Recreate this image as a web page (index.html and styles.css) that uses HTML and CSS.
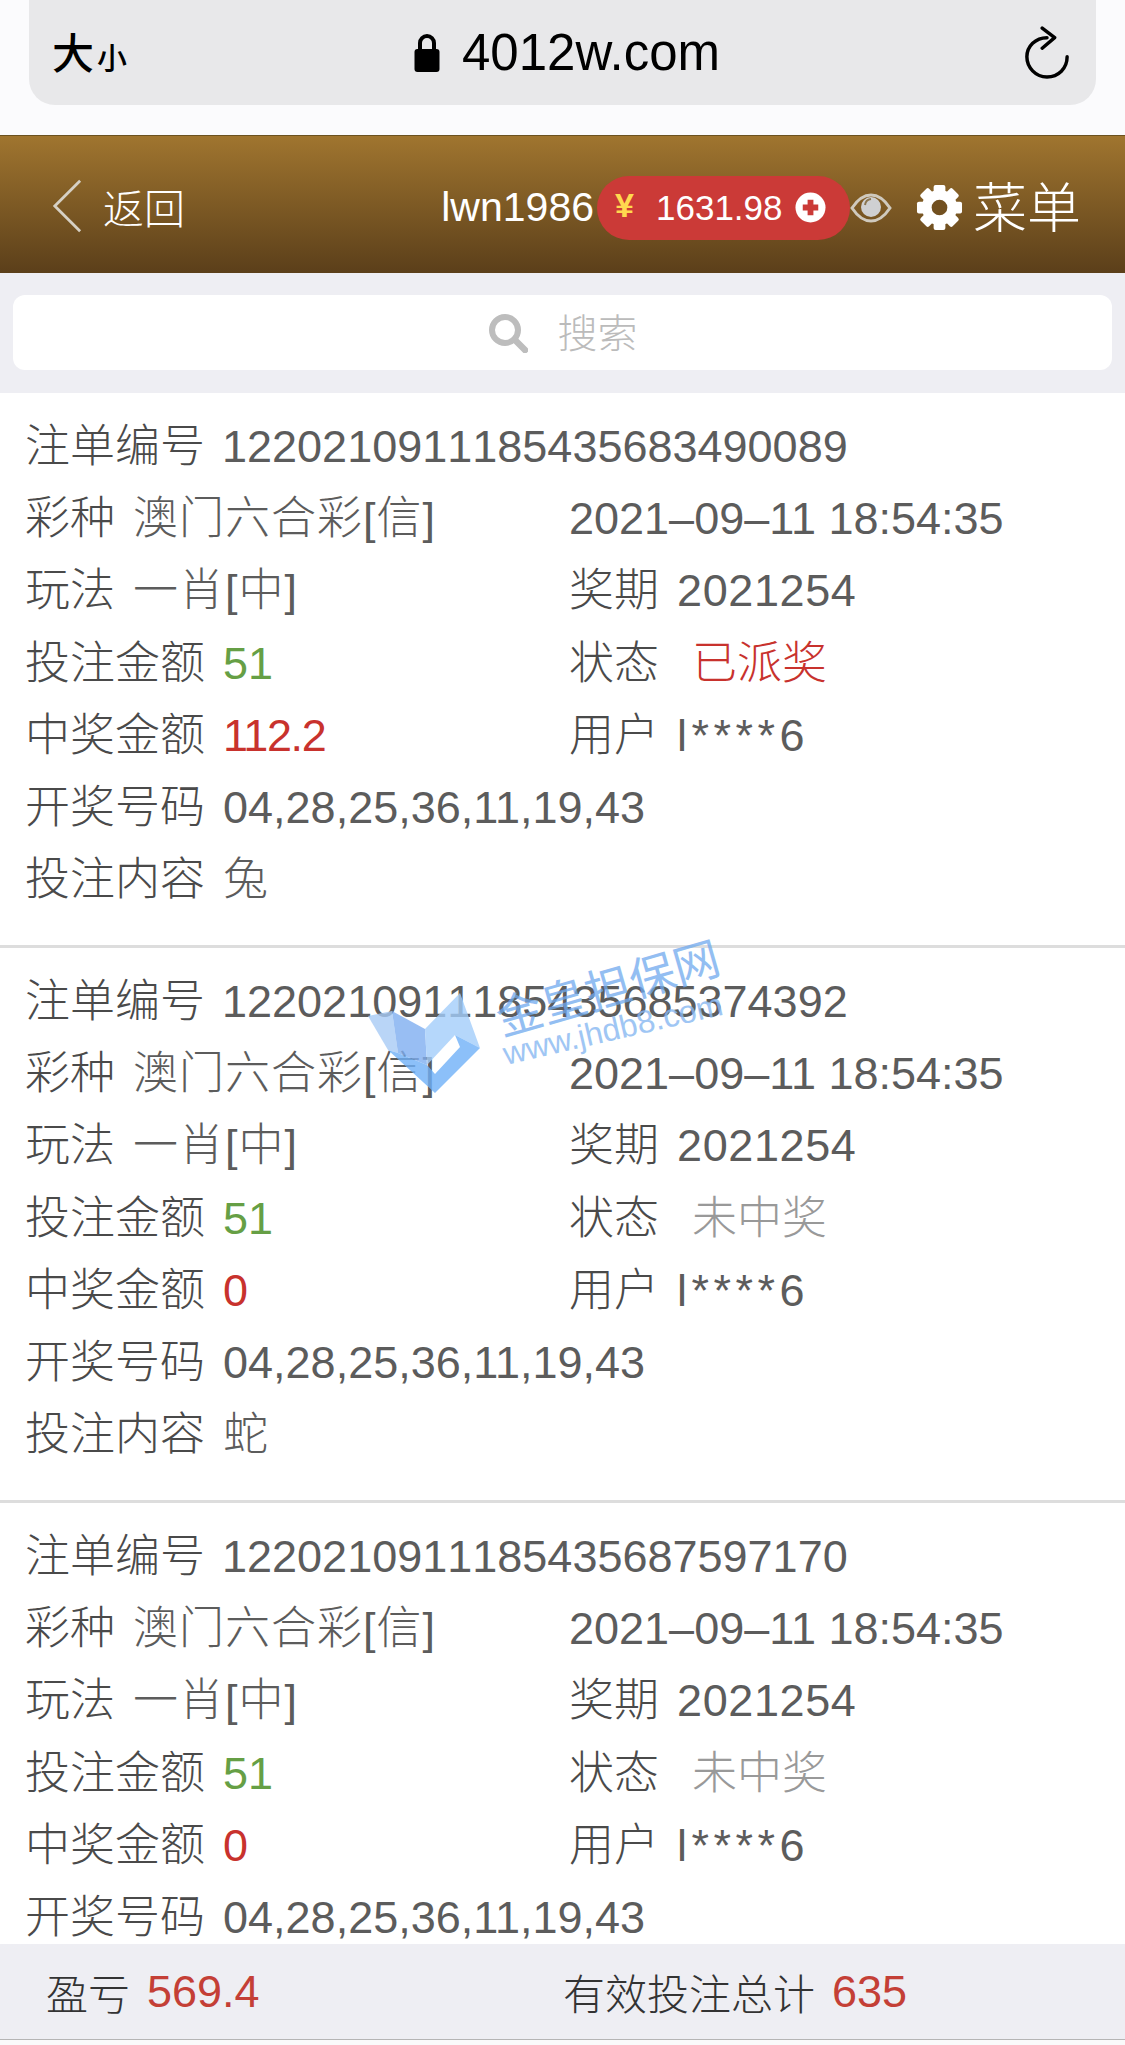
FILE: index.html
```html
<!DOCTYPE html>
<html lang="zh-CN">
<head>
<meta charset="utf-8">
<title>注单</title>
<link rel="stylesheet" href="styles.css">
</head>
<body>
<div class="page">
  <div class="chrome">
    <div class="urlbar">
      <span class="aa"><span class="aa-big">大</span><span class="aa-small">小</span></span>
      <span class="url">
        <svg class="lock" viewBox="0 0 26 40"><path d="M6 17V10a7 7 0 0 1 14 0v7" fill="none" stroke="#000" stroke-width="4"/><rect x="0.5" y="16" width="25" height="23" rx="3" fill="#000"/></svg>
        <span class="url-text">4012w.com</span>
      </span>
      <svg class="reload" viewBox="0 0 48 56"><path d="M24 12C12 12 3 21 3 32s9 21 21 21 21-9 21-21" fill="none" stroke="#000" stroke-width="3.6" stroke-linecap="round"/><path d="M19 2l13 10-13 11" fill="none" stroke="#000" stroke-width="3.6" stroke-linecap="round" stroke-linejoin="round"/></svg>
    </div>
  </div>
  <header class="topbar">
    <div class="back">
      <svg class="chevron" viewBox="0 0 32 58"><path d="M30 2L3 29l27 27" fill="none" stroke="#d6d0c4" stroke-width="3"/></svg>
      <span class="back-text">返回</span>
    </div>
    <div class="account">
      <span class="username">lwn1986</span>
      <span class="balance">
        <span class="yen">¥</span>
        <span class="amount">1631.98</span>
        <svg class="plus" viewBox="0 0 32 32"><circle cx="16" cy="16" r="15.5" fill="#fff"/><path d="M16 8v16M8 16h16" stroke="#cb3a37" stroke-width="6"/></svg>
      </span>
      <svg class="eye" viewBox="0 0 42 30"><path d="M2 15C8 6 14 2 21 2s13 4 19 13c-6 9-12 13-19 13S8 24 2 15z" fill="none" stroke="#cfc9bd" stroke-width="3"/><circle cx="21" cy="14" r="10" fill="#cfd0d2"/><path d="M15 12a7 7 0 0 1 6-6" fill="none" stroke="#8a7550" stroke-width="2"/></svg>
      <svg class="gear" viewBox="0 0 48 48">
        <g fill="#fff">
          <rect x="18" y="1" width="12" height="46" rx="2"/>
          <rect x="18" y="1" width="12" height="46" rx="2" transform="rotate(45 24 24)"/>
          <rect x="18" y="1" width="12" height="46" rx="2" transform="rotate(90 24 24)"/>
          <rect x="18" y="1" width="12" height="46" rx="2" transform="rotate(135 24 24)"/>
        </g>
        <circle cx="24" cy="24" r="13" fill="none" stroke="#fff" stroke-width="10"/>
        <circle cx="24" cy="24" r="8" fill="#725020"/>
      </svg>
      <span class="menu-text">菜单</span>
    </div>
  </header>
  <div class="searchwrap">
    <div class="search">
      <svg class="search-icon" viewBox="0 0 40 40"><circle cx="17" cy="17" r="13" fill="none" stroke="#bdbdbd" stroke-width="6"/><path d="M27 27l10 10" stroke="#bdbdbd" stroke-width="6.5" stroke-linecap="round"/></svg>
      <span class="search-text">搜索</span>
    </div>
  </div>
  <main class="list">
    <article class="card">
      <div class="row"><span class="label">注单编号</span><span class="val serial">1220210911185435683490089</span></div>
      <div class="row two"><div class="cell"><span class="label">彩种</span><span class="val game">澳门六合彩[信]</span></div><div class="cell"><span class="val">2021–09–11 18:54:35</span></div></div>
      <div class="row two"><div class="cell"><span class="label">玩法</span><span class="val game">一肖[中]</span></div><div class="cell"><span class="label">奖期</span><span class="val period">2021254</span></div></div>
      <div class="row two"><div class="cell"><span class="label">投注金额</span><span class="green">51</span></div><div class="cell"><span class="label">状态</span><span class="status red">已派奖</span></div></div>
      <div class="row two"><div class="cell"><span class="label">中奖金额</span><span class="red prize">112.2</span></div><div class="cell"><span class="label">用户</span><span class="val masked">l****6</span></div></div>
      <div class="row"><span class="label">开奖号码</span><span class="val">04,28,25,36,11,19,43</span></div>
      <div class="row"><span class="label">投注内容</span><span class="val">兔</span></div>
    </article>
    <article class="card">
      <div class="row"><span class="label">注单编号</span><span class="val serial">1220210911185435685374392</span></div>
      <div class="row two"><div class="cell"><span class="label">彩种</span><span class="val game">澳门六合彩[信]</span></div><div class="cell"><span class="val">2021–09–11 18:54:35</span></div></div>
      <div class="row two"><div class="cell"><span class="label">玩法</span><span class="val game">一肖[中]</span></div><div class="cell"><span class="label">奖期</span><span class="val period">2021254</span></div></div>
      <div class="row two"><div class="cell"><span class="label">投注金额</span><span class="green">51</span></div><div class="cell"><span class="label">状态</span><span class="status gray">未中奖</span></div></div>
      <div class="row two"><div class="cell"><span class="label">中奖金额</span><span class="red">0</span></div><div class="cell"><span class="label">用户</span><span class="val masked">l****6</span></div></div>
      <div class="row"><span class="label">开奖号码</span><span class="val">04,28,25,36,11,19,43</span></div>
      <div class="row"><span class="label">投注内容</span><span class="val">蛇</span></div>
    </article>
    <article class="card">
      <div class="row"><span class="label">注单编号</span><span class="val serial">1220210911185435687597170</span></div>
      <div class="row two"><div class="cell"><span class="label">彩种</span><span class="val game">澳门六合彩[信]</span></div><div class="cell"><span class="val">2021–09–11 18:54:35</span></div></div>
      <div class="row two"><div class="cell"><span class="label">玩法</span><span class="val game">一肖[中]</span></div><div class="cell"><span class="label">奖期</span><span class="val period">2021254</span></div></div>
      <div class="row two"><div class="cell"><span class="label">投注金额</span><span class="green">51</span></div><div class="cell"><span class="label">状态</span><span class="status gray">未中奖</span></div></div>
      <div class="row two"><div class="cell"><span class="label">中奖金额</span><span class="red">0</span></div><div class="cell"><span class="label">用户</span><span class="val masked">l****6</span></div></div>
      <div class="row"><span class="label">开奖号码</span><span class="val">04,28,25,36,11,19,43</span></div>
    </article>
  </main>
  <footer class="totals">
    <div class="total total-left"><span>盈亏</span><span class="total-val">569.4</span></div>
    <div class="total total-right"><span>有效投注总计</span><span class="total-val">635</span></div>
  </footer>
  <svg class="watermark" viewBox="0 0 380 190">
    <polygon points="8,86 32,81 38,123 28,120" fill="#a7cbf5" opacity=".8"/>
    <polygon points="32,81 65,99 67,135 38,123" fill="#7eaef0" opacity=".8"/>
    <polygon points="65,99 100,63 120,118 95,105 67,135" fill="#a3cdfa" opacity=".8"/>
    <polygon points="28,120 38,123 67,135 75,144 100,117 95,105 120,118 75,163" fill="#6fb0f8" opacity=".8"/>
    <text class="wm-cn" transform="translate(142 106) rotate(-16)">金皇担保网</text>
    <text class="wm-en" transform="translate(146 135) rotate(-13)">www.jhdb8.com</text>
  </svg>
</div>
</body>
</html>
```

FILE: styles.css
```css
* { box-sizing: border-box; }
html, body { margin: 0; padding: 0; }
body {
  font-family: "Liberation Sans", "Noto Sans CJK SC", sans-serif;
  color: #555;
  background: #fff;
}
.page {
  position: relative;
  width: 1125px;
  height: 2045px;
  display: flex;
  flex-direction: column;
  overflow: hidden;
  background: #fafafa;
}
.chrome {
  height: 135px;
  flex: none;
  background: #fbfbfd;
  padding: 0 29px;
}
.urlbar {
  height: 105px;
  border-radius: 0 0 26px 26px;
  background: #e8e8ea;
  display: flex;
  align-items: center;
  justify-content: space-between;
  padding: 0 26px 0 23px;
}
.aa { display: flex; align-items: baseline; color: #000; width: 100px; font-weight: 500; margin-bottom: 4px; }
.aa-big { font-size: 42px; }
.aa-small { font-size: 30px; margin-left: 3px; }
.url { display: flex; align-items: center; gap: 22px; color: #000; margin-right: 42px; }
.lock { width: 26px; height: 40px; }
.url-text { font-size: 51px; line-height: 1; }
.reload { width: 46px; height: 54px; }
.topbar {
  height: 138px;
  flex: none;
  display: flex;
  align-items: center;
  justify-content: space-between;
  padding: 6px 44px 0 52px;
  border-top: 1px solid #6b5120;
  background: linear-gradient(#a0752f, #5b3f1a);
  color: #fff;
}
.back { display: flex; align-items: center; gap: 21px; }
.chevron { width: 30px; height: 56px; margin-bottom: 3px; }
.back-text { font-size: 41px; font-weight: 300; margin-bottom: 4px; }
.account { display: flex; align-items: center; }
.username { font-size: 41px; margin-right: 3px; }
.balance {
  width: 253px;
  height: 64px;
  border-radius: 32px;
  background: #cb3a37;
  display: flex;
  align-items: center;
  padding-left: 18px;
  font-size: 35px;
}
.yen { color: #ffd94f; font-weight: 700; font-size: 34px; width: 41px; margin-bottom: 4px; }
.amount { width: 128px; }
.plus { width: 31px; height: 31px; margin-left: 11px; }
.eye { width: 42px; height: 30px; }
.gear { width: 47px; height: 47px; margin-left: 24px; }
.menu-text { font-size: 54px; font-weight: 300; margin: 3px 0 0 10px; line-height: 1; }
.searchwrap {
  height: 120px;
  flex: none;
  padding: 22px 13px 23px;
  background: #eeeef3;
}
.search {
  height: 75px;
  border-radius: 12px;
  background: #fff;
  display: flex;
  align-items: center;
  justify-content: center;
  gap: 30px;
}
.search-icon { width: 40px; height: 40px; }
.search-text { color: #bbb; font-size: 40px; font-weight: 300; margin-bottom: 4px; }
.list {
  flex: 1;
  min-height: 0;
  overflow: hidden;
  background: #fff;
}
.card {
  height: 555px;
  padding: 18px 25px 0;
  border-bottom: 3px solid #ddd;
}
.row {
  height: 72.2px;
  display: flex;
  align-items: center;
  font-size: 45px;
  font-weight: 300;
  line-height: 72px;
  white-space: nowrap;
}
.two { display: grid; grid-template-columns: 544px 1fr; }
.cell { display: flex; align-items: center; }
.label { margin-right: 18px; color: #4a4a4a; }
.val { color: #5c5c5c; }
.serial { font-kerning: none; margin-left: -1px; }
.game { letter-spacing: 1px; }
.period { letter-spacing: .6px; }
.prize { letter-spacing: -1.4px; }
.status { margin-left: 15px; }
.masked { letter-spacing: 4.5px; }
.green { color: #669f45; }
.red { color: #c8322d; }
.gray { color: #999; }
.totals {
  height: 96px;
  flex: none;
  margin-bottom: 5px;
  display: flex;
  align-items: center;
  background: #eeeef3;
  border-bottom: 1px solid #b5b5b5;
  font-size: 42px;
  font-weight: 300;
  color: #333;
}
.total { display: flex; align-items: center; gap: 17px; }
.total-left { width: 563px; padding-left: 46px; }
.total-val { color: #c43f36; font-size: 45px; }
.watermark {
  position: absolute;
  left: 360px;
  top: 930px;
  width: 380px;
  height: 190px;
  pointer-events: none;
}
.wm-cn { font-size: 46px; fill: #6fa9ee; opacity: .75; }
.wm-en { font-size: 32px; fill: #88b8f2; opacity: .8; }
```
